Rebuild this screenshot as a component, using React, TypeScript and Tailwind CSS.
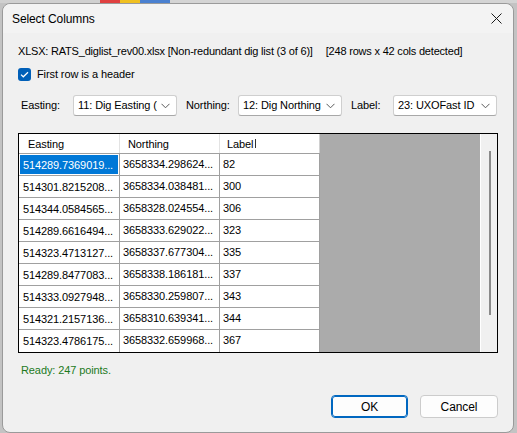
import React from 'react';

const rows = [
  ['514289.7369019...', '3658334.298624...', '82'],
  ['514301.8215208...', '3658334.038481...', '300'],
  ['514344.0584565...', '3658328.024554...', '306'],
  ['514289.6616494...', '3658333.629022...', '323'],
  ['514323.4713127...', '3658337.677304...', '335'],
  ['514289.8477083...', '3658338.186181...', '337'],
  ['514333.0927948...', '3658330.259807...', '343'],
  ['514321.2157136...', '3658310.639341...', '344'],
  ['514323.4786175...', '3658332.659968...', '367'],
];

function Combo({ value }: { value: string }) {
  return (
    <div className="w-[104px] h-[21px] bg-white border border-[#cfcfcf] border-b-[#a8a8a8] rounded-[3px] flex items-center pl-[4px] pr-[6px] overflow-hidden">
      <span className="flex-1 whitespace-nowrap overflow-hidden text-black">{value}</span>
      <svg width="9" height="6" viewBox="0 0 9 6" className="shrink-0 ml-[4px]">
        <path d="M0.5 0.8 L4.5 4.8 L8.5 0.8" fill="none" stroke="#5a5a5a" strokeWidth="1" />
      </svg>
    </div>
  );
}

export default function App() {
  return (
    <div
      className="w-[517px] h-[433px] bg-[#c3c3c3] flex flex-col overflow-hidden text-[11px] tracking-[-0.1px] text-black"
      style={{ fontFamily: '"Liberation Sans", Arial, sans-serif' }}
    >
      {/* desktop strip behind the dialog */}
      <div className="h-[3px] flex shrink-0">
        <div className="w-[100px] bg-[#d0d0d0]" />
        <div className="w-[20px] bg-[#e04040]" />
        <div className="w-[20px] bg-[#f0c020]" />
        <div className="w-[30px] bg-[#4a80d0]" />
        <div className="flex-1 bg-[#d4d4d4]" />
      </div>

      <div className="flex-1 mx-[2px] mr-[3px] bg-[#f0f0f0] border border-[#9a9a9a] rounded-[8px] flex flex-col">
        {/* title bar */}
        <div className="h-[29px] flex items-center pl-[9px] pr-[10px] bg-[#f3f3f3] rounded-t-[8px]">
          <span className="flex-1 mt-[1px] text-[12px]">Select Columns</span>
          <svg width="11" height="11" viewBox="0 0 11 11" className="mr-[1px]">
            <path d="M0.5 0.5 L10.5 10.5 M10.5 0.5 L0.5 10.5" stroke="#1a1a1a" strokeWidth="1" />
          </svg>
        </div>

        <div className="pl-[15px] pr-[15px] flex flex-col">
          <div className="h-[15px] mt-[11px] leading-[15px] whitespace-nowrap tracking-[-0.2px]">
            XLSX: RATS_diglist_rev00.xlsx [Non-redundant dig list (3 of 6)]<span className="ml-[13px]">[248 rows x 42 cols detected]</span>
          </div>

          <div className="mt-[9px] h-[13px] flex items-center">
            <div className="w-[13px] h-[13px] rounded-[3px] bg-[#005fb8] flex items-center justify-center">
              <svg width="9" height="7" viewBox="0 0 9 7">
                <path d="M1 3.6 L3.3 5.8 L8 1.2" fill="none" stroke="white" strokeWidth="1.2" />
              </svg>
            </div>
            <span className="ml-[6px]">First row is a header</span>
          </div>

          <div className="mt-[14px] flex items-center h-[21px]">
            <span className="w-[55px] pl-[3px]">Easting:</span>
            <Combo value="11: Dig Easting (m)" />
            <span className="w-[61px] pl-[9px]">Northing:</span>
            <Combo value="12: Dig Northing (m)" />
            <span className="w-[51px] pl-[9px]">Label:</span>
            <Combo value="23: UXOFast ID" />
          </div>

          {/* grid */}
          <div className="mt-[17px] w-[480px] h-[220px] border border-black flex bg-[#ababab]">
            <div className="flex flex-col w-[301px] shrink-0">
              <div className="h-[20px] flex bg-white border-b border-[#a0a0a0]">
                <div className="w-[101px] pl-[9px] leading-[20px] border-r border-[#e3e3e3]">Easting</div>
                <div className="w-[100px] pl-[8px] leading-[20px] border-r border-[#e3e3e3]">Northing</div>
                <div className="w-[100px] pl-[7px] leading-[20px] border-r border-[#d0d0d0] flex items-center">
                  Label
                  <span className="ml-[2px] w-[1px] h-[9px] bg-[#333]" />
                </div>
              </div>
              {rows.map((r, i) => (
                <div key={i} className="h-[22px] flex bg-white border-b border-[#a0a0a0] last:border-b-0">
                  <div className="w-[101px] p-[1px] border-r border-[#a0a0a0]">
                    <div className={`h-full pl-[3px] leading-[20px] whitespace-nowrap overflow-hidden ${i === 0 ? 'bg-[#0078d7] text-white' : ''}`}>{r[0]}</div>
                  </div>
                  <div className="w-[100px] pl-[3px] leading-[21px] border-r border-[#a0a0a0] whitespace-nowrap overflow-hidden">{r[1]}</div>
                  <div className="w-[100px] pl-[3px] leading-[21px] border-r border-[#a0a0a0]">{r[2]}</div>
                </div>
              ))}
            </div>
            <div className="flex-1" />
            <div className="w-[17px] bg-[#f0f0f0] border-l border-white flex justify-center pt-[17px]">
              <div className="w-[2px] h-[164px] bg-[#8a8a8a] ml-[1px]" />
            </div>
          </div>

          <div className="mt-[10px] h-[15px] leading-[15px] pl-[3px] text-[#1d7a1d]">Ready: 247 points.</div>

          <div className="mt-[17px] flex justify-end gap-[12px]">
            <button className="w-[77px] h-[23px] rounded-[4px] bg-[#fdfdfd] border border-[#0067c0] outline outline-1 outline-[#0067c0] -outline-offset-2 text-[12px]">OK</button>
            <button className="w-[78px] h-[23px] rounded-[4px] bg-[#fdfdfd] border border-[#cccccc] text-[12px]">Cancel</button>
          </div>
        </div>
      </div>
    </div>
  );
}
